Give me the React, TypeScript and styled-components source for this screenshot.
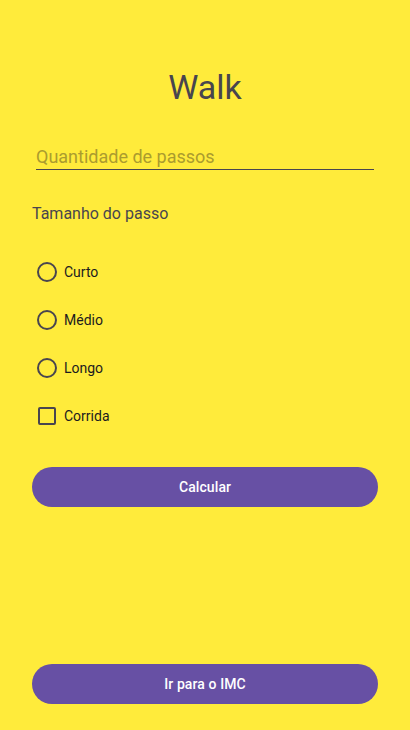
import { useState } from "react";
import styled, { createGlobalStyle } from "styled-components";

const GlobalStyle = createGlobalStyle`
  html, body {
    margin: 0;
    padding: 0;
    background: #ffeb3b;
    font-family: Roboto, "Noto Sans", Arial, sans-serif;
  }
`;

const Screen = styled.main`
  height: 730px;
  box-sizing: border-box;
  display: flex;
  flex-direction: column;
  padding: 0 32px 26px;
  background: #ffeb3b;
`;

const Title = styled.h1`
  margin: 67px 0 0;
  font-size: 34px;
  line-height: 40px;
  font-weight: 400;
  text-align: center;
  color: #48454e;
`;

const StepsInput = styled.input`
  margin: 36px 4px 0;
  height: 27px;
  box-sizing: border-box;
  padding: 0;
  border: none;
  border-bottom: 1px solid #49454f;
  background: transparent;
  outline: none;
  font-family: inherit;
  font-size: 18px;
  color: #1c1b1f;

  &::placeholder {
    color: #ab9c2e;
  }
`;

const SectionLabel = styled.p`
  margin: 34px 0 24px;
  font-size: 16px;
  line-height: 20px;
  color: #48454e;
`;

const Option = styled.label`
  display: flex;
  align-items: center;
  height: 48px;
  font-size: 14px;
  color: #1c1b1f;
  cursor: pointer;
`;

const ControlSlot = styled.span`
  width: 30px;
  display: flex;
  justify-content: center;
  margin-right: 2px;
`;

const Radio = styled.input.attrs({ type: "radio" })`
  appearance: none;
  margin: 0;
  width: 20px;
  height: 20px;
  border: 2px solid #49454f;
  border-radius: 50%;
  box-sizing: border-box;
  display: grid;
  place-items: center;

  &:checked::after {
    content: "";
    width: 10px;
    height: 10px;
    border-radius: 50%;
    background: #6750a4;
  }
  &:checked {
    border-color: #6750a4;
  }
`;

const Checkbox = styled.input.attrs({ type: "checkbox" })`
  appearance: none;
  margin: 0;
  width: 18px;
  height: 18px;
  border: 2px solid #49454f;
  border-radius: 2px;
  box-sizing: border-box;

  &:checked {
    background: #6750a4;
    border-color: #6750a4;
  }
`;

const PillButton = styled.button<{ $push?: boolean }>`
  margin-top: ${({ $push }) => ($push ? "auto" : "27px")};
  height: 40px;
  border: none;
  border-radius: 20px;
  background: #6750a4;
  color: #ffffff;
  font-family: inherit;
  font-size: 14px;
  font-weight: 500;
  letter-spacing: 0.1px;
  cursor: pointer;
`;

const sizes = ["Curto", "Médio", "Longo"];

export default function App() {
  const [size, setSize] = useState("");
  const [running, setRunning] = useState(false);

  return (
    <>
      <GlobalStyle />
      <Screen>
        <Title>Walk</Title>
        <StepsInput type="number" placeholder="Quantidade de passos" />

        <SectionLabel>Tamanho do passo</SectionLabel>

        {sizes.map((s) => (
          <Option key={s}>
            <ControlSlot>
              <Radio name="size" checked={size === s} onChange={() => setSize(s)} />
            </ControlSlot>
            {s}
          </Option>
        ))}
        <Option>
          <ControlSlot>
            <Checkbox checked={running} onChange={(e) => setRunning(e.target.checked)} />
          </ControlSlot>
          Corrida
        </Option>

        <PillButton>Calcular</PillButton>
        <PillButton $push>Ir para o IMC</PillButton>
      </Screen>
    </>
  );
}
